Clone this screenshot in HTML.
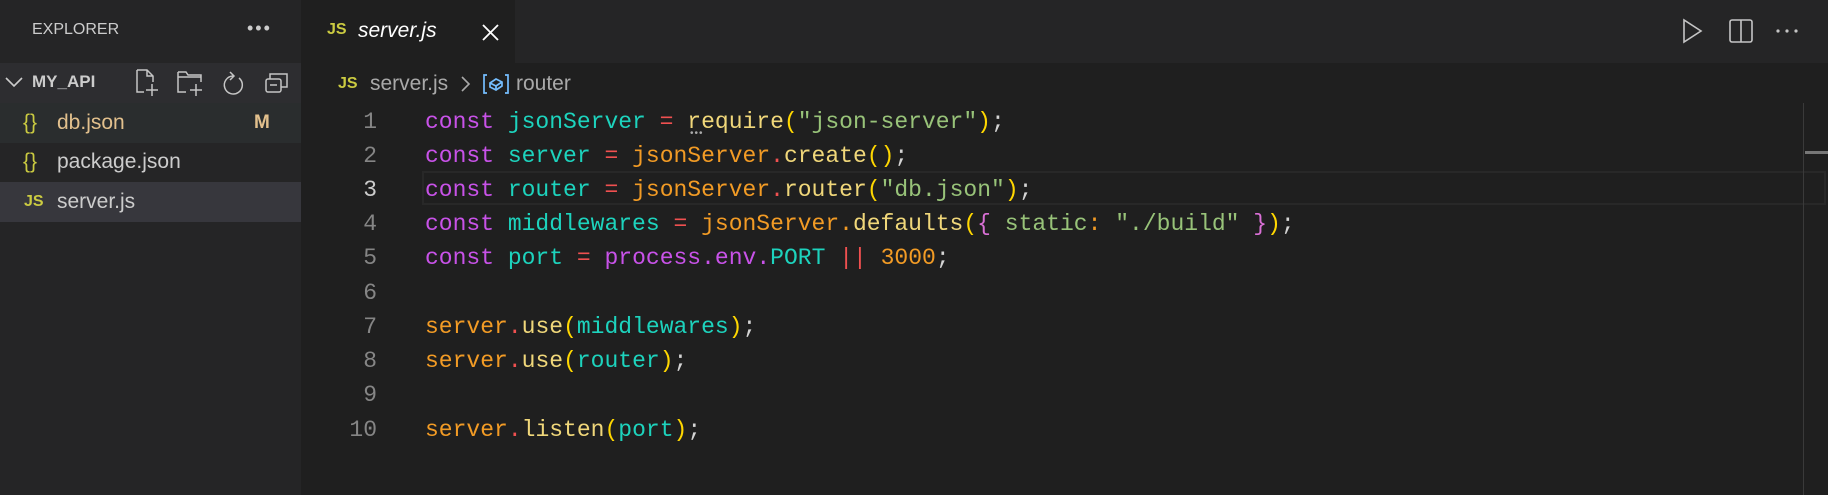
<!DOCTYPE html>
<html><head><meta charset="utf-8"><style>
*{margin:0;padding:0;box-sizing:border-box}
body{width:1828px;height:495px;background:#1f1f1f;overflow:hidden;position:relative;font-family:"Liberation Sans",sans-serif}
.abs{position:absolute}
#side{left:0;top:0;width:301px;height:495px;background:#252526}
#tabbar{left:301px;top:0;width:1527px;height:63px;background:#252526}
#tab{left:301px;top:0;width:214px;height:63px;background:#1f1f1f}
.row{position:absolute;left:0;width:301px;height:40px;font-size:21px;color:#cccccc;line-height:40px}
.code{position:absolute;left:425px;font-family:"Liberation Mono",monospace;font-size:23px;white-space:pre;line-height:34px;color:#d4d4d4}
.ln{position:absolute;left:320px;width:57px;text-align:right;font-family:"Liberation Mono",monospace;font-size:23px;line-height:34px;color:#858585}
.k{color:#c852e8}.v{color:#1dd3bd}.o{color:#f05050}.j{color:#f29b25}.f{color:#f0d77a}.p{color:#ffd700}.b{color:#da70d6}.s{color:#98c379}.n{color:#f29b25}.w{color:#d4d4d4}
.js{color:#cbcb41;font-weight:bold;font-family:"Liberation Sans",sans-serif}
</style></head><body>
<div id="side" class="abs"></div>
<div class="abs" style="left:32px;top:21px;font-size:16px;color:#cccccc">EXPLORER</div>
<div class="abs" style="left:247px;top:18px;font-size:18px;color:#cccccc;letter-spacing:2px">•••</div>
<div class="abs" style="left:0;top:63px;width:301px;height:40px;background:#2d2d30"></div>
<svg class="abs" style="left:4px;top:74px" width="20" height="16"><path d="M2 4 L10 12 L18 4" stroke="#cccccc" stroke-width="1.6" fill="none"/></svg>
<div class="abs" style="left:32px;top:72px;font-size:17px;font-weight:bold;color:#cccccc">MY_API</div>
<svg class="abs" style="left:134px;top:68px" width="170" height="30" fill="none" stroke="#c5c5c5" stroke-width="1.5">
<path d="M3 2 H13 L19 8 V14 M13 2 V8 H19 M3 2 V24 H10"/><path d="M18 16 V28 M12 22 H24"/>
<path d="M44 4 H52 L54 7 H67 V14 M44 4 V24 H52 M44 9 H67"/><path d="M62 16 V28 M56 22 H68"/>
<path d="M99 8 A9 9 0 1 0 105 10 M96 4 L100 8 L96 12"/>
<rect x="132" y="11" width="15" height="13" rx="2"/><path d="M136 11 V6 H153 V19 H147 M136 17 H143"/>
</svg>
<div class="row" style="top:103px;background:#2a2d2e"><span class="abs js" style="left:23px;color:#cbcb41;font-weight:normal">{}</span><span class="abs" style="left:57px;color:#e2c08d">db.json</span><span class="abs" style="left:254px;color:#e2c08d;font-weight:bold;font-size:19px">M</span></div>
<div class="row" style="top:142px"><span class="abs" style="left:23px;color:#cbcb41">{}</span><span class="abs" style="left:57px">package.json</span></div>
<div class="row" style="top:182px;background:#37373d"><span class="abs js" style="left:24px;font-size:16px">JS</span><span class="abs" style="left:57px">server.js</span></div>

<div id="tabbar" class="abs"></div>
<div id="tab" class="abs"></div>
<div class="abs js" style="left:327px;top:21px;font-size:16px">JS</div>
<div class="abs" style="left:358px;top:19px;font-size:21px;font-style:italic;color:#ffffff">server.js</div>
<svg class="abs" style="left:482px;top:24px" width="17" height="17"><path d="M1 1 L16 16 M16 1 L1 16" stroke="#ffffff" stroke-width="1.8"/></svg>
<svg class="abs" style="left:1680px;top:18px" width="130" height="26" fill="none" stroke="#c5c5c5" stroke-width="1.6">
<path d="M4 2 L4 24 L21 13 Z"/>
<rect x="50" y="2" width="22" height="22" rx="2"/><path d="M61 2 V24"/>
<circle cx="98" cy="13" r="1.6" fill="#c5c5c5" stroke="none"/><circle cx="107" cy="13" r="1.6" fill="#c5c5c5" stroke="none"/><circle cx="116" cy="13" r="1.6" fill="#c5c5c5" stroke="none"/>
</svg>

<div class="abs js" style="left:338px;top:75px;font-size:16px">JS</div>
<div class="abs" style="left:370px;top:72px;font-size:21px;color:#a9a9a9">server.js</div>
<svg class="abs" style="left:460px;top:75px" width="12" height="18"><path d="M2 2 L9 9 L2 16" stroke="#a9a9a9" stroke-width="1.6" fill="none"/></svg>
<svg class="abs" style="left:482px;top:73px" width="28" height="22" fill="none" stroke="#75beff" stroke-width="1.7"><path d="M5 2 H2 V20 H5 M23 2 H26 V20 H23"/><path d="M8 10 L14 6 L20 9 V13 L14 17 L8 14 Z M8 10 L14 13 L20 9 M14 13 V17"/></svg>
<div class="abs" style="left:516px;top:72px;font-size:21px;color:#a9a9a9">router</div>

<div class="abs" style="left:422px;top:171px;width:1404px;height:34px;border:2px solid #282828"></div>
<div class="abs" style="left:1803px;top:103px;width:1px;height:392px;background:#3a3a3a"></div>
<div class="abs" style="left:1805px;top:151px;width:23px;height:3px;background:#777"></div>

<div class="ln" style="top:105px">1</div>
<div class="ln" style="top:139px">2</div>
<div class="ln" style="top:173px;color:#cccccc">3</div>
<div class="ln" style="top:207px">4</div>
<div class="ln" style="top:241px">5</div>
<div class="ln" style="top:276px">6</div>
<div class="ln" style="top:310px">7</div>
<div class="ln" style="top:344px">8</div>
<div class="ln" style="top:378px">9</div>
<div class="ln" style="top:413px">10</div>

<div class="code" style="top:105px"><span class="k">const</span> <span class="v">jsonServer</span> <span class="o">=</span> <span class="f">require</span><span class="p">(</span><span class="s">"json-server"</span><span class="p">)</span>;</div>
<div class="abs" style="left:690px;top:128px;font-size:10px;color:#aaa;letter-spacing:1px">•••</div>
<div class="code" style="top:139px"><span class="k">const</span> <span class="v">server</span> <span class="o">=</span> <span class="j">jsonServer</span><span class="o">.</span><span class="f">create</span><span class="p">()</span>;</div>
<div class="code" style="top:173px"><span class="k">const</span> <span class="v">router</span> <span class="o">=</span> <span class="j">jsonServer</span><span class="o">.</span><span class="f">router</span><span class="p">(</span><span class="s">"db.json"</span><span class="p">)</span>;</div>
<div class="code" style="top:207px"><span class="k">const</span> <span class="v">middlewares</span> <span class="o">=</span> <span class="j">jsonServer</span><span class="j">.</span><span class="f">defaults</span><span class="p">(</span><span class="b">{</span> <span class="s">static</span><span class="j">:</span> <span class="s">"./build"</span> <span class="b">}</span><span class="p">)</span>;</div>
<div class="code" style="top:241px"><span class="k">const</span> <span class="v">port</span> <span class="o">=</span> <span class="k">process</span><span class="k">.</span><span class="k">env</span><span class="k">.</span><span class="v">PORT</span> <span class="o">||</span> <span class="n">3000</span>;</div>
<div class="code" style="top:310px"><span class="j">server</span><span class="o">.</span><span class="f">use</span><span class="p">(</span><span class="v">middlewares</span><span class="p">)</span>;</div>
<div class="code" style="top:344px"><span class="j">server</span><span class="o">.</span><span class="f">use</span><span class="p">(</span><span class="v">router</span><span class="p">)</span>;</div>
<div class="code" style="top:413px"><span class="j">server</span><span class="o">.</span><span class="f">listen</span><span class="p">(</span><span class="v">port</span><span class="p">)</span>;</div>
</body></html>
